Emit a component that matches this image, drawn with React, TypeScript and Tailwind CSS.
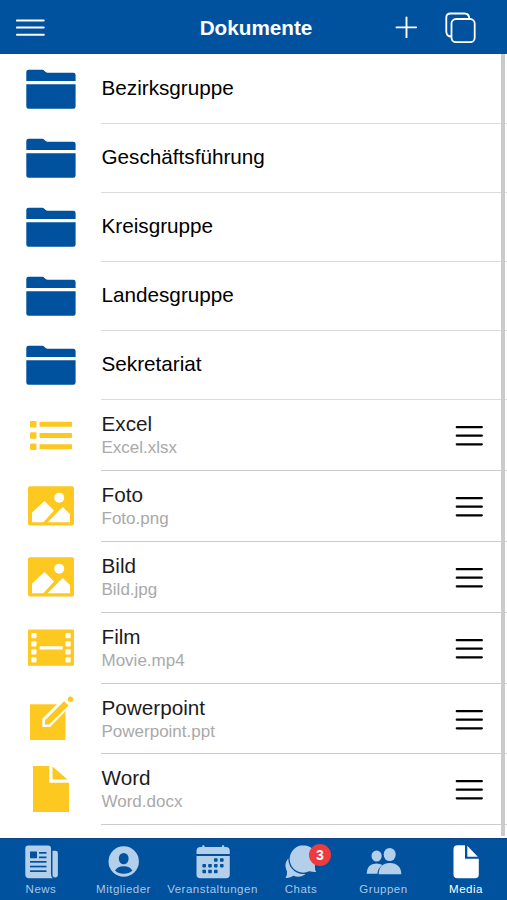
import type { ReactNode } from 'react';

const folders = ['Bezirksgruppe', 'Geschäftsführung', 'Kreisgruppe', 'Landesgruppe', 'Sekretariat'];

const FolderIcon = () => (
  <svg className="h-[68px] w-[101px] shrink-0 fill-[#00519e]" viewBox="0 0 101 68">
    <path d="M26.3 26V17q0-2.3 2.3-2.3H42q1.5 0 2.5 1.2l.8.8q1 1 2.5 1H73.3q2.300 0 2.300 2.300V26z" />
    <path d="M26.300 29.300H75.600V51.500q0 2.300-2.300 2.300H28.600q-2.300 0-2.300-2.300z" />
  </svg>
);

const ListIcon = () => (
  <>
    {[21, 32.2, 43.5].map((y) => (
      <g key={y}>
        <rect x="30" y={y} width="6.5" height="6.5" rx="1.2" />
        <rect x="39.5" y={y + 0.7} width="32.5" height="5" rx="0.8" />
      </g>
    ))}
  </>
);

const ImageIcon = () => (
  <>
    <rect x="28" y="15.3" width="46" height="39.3" rx="2" />
    <g className="fill-white">
      <circle cx="59.2" cy="26.7" r="5" />
      <path d="M32 51.3V41.5L44.5 30 54 39.5 43.3 51.3z" />
      <path d="M47.5 51.3 62.7 36 70 43V51.3z" />
    </g>
  </>
);

const FilmIcon = () => (
  <>
    <rect x="28" y="16.5" width="46" height="36.3" rx="1" />
    <g className="fill-white">
      {[20, 28.2, 36.2, 44.2].map((y) => (
        <g key={y}>
          <rect x="31.3" y={y} width="5.2" height="5.2" rx="1" />
          <rect x="65.5" y={y} width="5.2" height="5.2" rx="1" />
        </g>
      ))}
      <rect x="39.5" y="33.2" width="23.3" height="3.3" rx="0.8" />
    </g>
  </>
);

const EditIcon = () => (
  <>
    <rect x="30" y="20.3" width="35.5" height="35.7" />
    <path className="fill-white" d="M42.300 43V34.800L61.500 15.500 72.500 20 50 43z" />
    <path d="M45 40.500V36.200L64 17.200 68.600 21.600 49.200 40.500z" />
    <circle cx="70.500" cy="15.300" r="2.700" />
  </>
);

const FileIcon = () => (
  <>
    <path d="M33 12H49.3V28.8H69V58H33z" />
    <path d="M52.5 12.5V25.5H67.5z" />
  </>
);

const files: { title: string; name: string; icon: ReactNode }[] = [
  { title: 'Excel', name: 'Excel.xlsx', icon: <ListIcon /> },
  { title: 'Foto', name: 'Foto.png', icon: <ImageIcon /> },
  { title: 'Bild', name: 'Bild.jpg', icon: <ImageIcon /> },
  { title: 'Film', name: 'Movie.mp4', icon: <FilmIcon /> },
  { title: 'Powerpoint', name: 'Powerpoint.ppt', icon: <EditIcon /> },
  { title: 'Word', name: 'Word.docx', icon: <FileIcon /> },
];

const NewsIcon = () => (
  <>
    <path d="M7.3 2.5H27Q30 2.5 30 5.5V31.5Q30 34 32 35.3H8Q4.3 35.3 4.3 31.5V5.5Q4.3 2.5 7.3 2.5z" />
    <path d="M31.5 7.8H34.5Q36.9 7.8 36.9 10.2V31.5Q36.9 34.5 34.2 34.5 31.5 34.5 31.5 31.5z" />
    <g className="fill-[#00519e]">
      <rect x="9" y="8.5" width="7" height="6.7" rx="0.6" />
      <rect x="18" y="9" width="7.5" height="1.7" />
      <rect x="18" y="13.5" width="7.5" height="1.7" />
      <rect x="9" y="18" width="16.5" height="1.7" />
      <rect x="9" y="22.7" width="16.5" height="1.7" />
      <rect x="9" y="27.3" width="16.5" height="1.7" />
    </g>
  </>
);

const MemberIcon = () => (
  <>
    <circle cx="19.7" cy="18.5" r="15.2" />
    <g className="fill-[#00519e]">
      <ellipse cx="19.7" cy="15.6" rx="4.9" ry="5.700" />
      <path d="M11 27.500Q13.500 23.200 19.700 23.200T28.400 27.500Q25 30.800 19.700 30.800T11 27.500z" />
    </g>
  </>
);

const calendarDots = [
  [22.8, 17], [28.8, 17],
  [11.2, 22.7], [17, 22.7], [22.8, 22.7], [28.8, 22.7],
  [11.2, 28.5], [17, 28.5], [22.8, 28.5],
];

const CalendarIcon = () => (
  <>
    <rect x="9.2" y="2.3" width="2.3" height="4" rx="0.8" />
    <rect x="28.9" y="2.3" width="2.3" height="4" rx="0.8" />
    <path d="M3.5 11V8Q3.5 4 7.5 4H32.8Q36.8 4 36.8 8V11z" />
    <path d="M3.5 13H36.8V31.5Q36.8 35.3 33 35.3H7.3Q3.5 35.3 3.5 31.5z" />
    <g className="fill-[#00519e]">
      {calendarDots.map(([x, y]) => (
        <rect key={`${x}-${y}`} x={x - 1.8} y={y - 1.7} width="3.6" height="3.4" rx="0.8" />
      ))}
    </g>
  </>
);

const ChatIcon = () => (
  <>
    <path d="M8 15Q4 18.5 4.5 23.5 5 26.5 6 28.5 6.5 31.5 4.5 34.8 9 35.3 12.5 32.8 18.5 35.3 24 31.5L24 20z" />
    <path
      className="stroke-[#00519e]"
      strokeWidth="1.3"
      d="M22.3 1.7A14.3 14.3 0 0 1 34.5 23.2Q34.5 26.5 36 29.7 31.5 30 28.5 28.9A14.3 14.3 0 1 1 22.3 1.7z"
    />
  </>
);

const GroupIcon = () => (
  <>
    <ellipse cx="12.6" cy="13" rx="5.100" ry="5.600" />
    <path d="M2.600 30.800Q2.600 21 12.500 20.500 16 20.500 18.500 22 14 25 13.300 30.800z" />
    <ellipse cx="25.700" cy="11.500" rx="6" ry="6.600" />
    <path d="M14.700 31.300Q15 20.300 25.800 20.100 37 20.300 37.300 31.300z" />
  </>
);

const MediaIcon = () => (
  <>
    <path d="M11.500 2.300H19V15.800H32.800V31.500Q32.800 35.300 29 35.300H11.500Q7.500 35.300 7.500 31.500V6.300Q7.500 2.300 11.500 2.300z" />
    <path d="M21.300 2.800 31.800 13.800H21.300z" />
  </>
);

const tabs: { label: string; width: string; icon: ReactNode; badge?: number; active?: boolean }[] = [
  { label: 'News', width: 'w-[82px]', icon: <NewsIcon /> },
  { label: 'Mitglieder', width: 'w-[83px]', icon: <MemberIcon /> },
  { label: 'Veranstaltungen', width: 'w-[95px]', icon: <CalendarIcon /> },
  { label: 'Chats', width: 'w-[82px]', icon: <ChatIcon />, badge: 3 },
  { label: 'Gruppen', width: 'w-[83px]', icon: <GroupIcon /> },
  { label: 'Media', width: 'w-[82px]', icon: <MediaIcon />, active: true },
];

const Header = () => (
  <header className="grid h-[54px] grid-cols-[1fr_auto_1fr] items-center bg-[#00519e] text-white">
    <button className="ml-4 w-7">
      <svg className="h-6 w-[29px] stroke-current" viewBox="0 0 29 24" strokeWidth="2.1" strokeLinecap="round">
        <path d="M1 5.5H27.700M1 12.500H27.700M1 19.700H27.700" />
      </svg>
    </button>
    <h1 className="ml-[5px] pt-px text-[20.700px]/7 font-bold">Dokumente</h1>
    <div className="mr-[31px] flex items-center justify-end gap-[27px]">
      <button>
        <svg className="h-[22px] w-[22px] stroke-current" viewBox="0 0 22 22" strokeWidth="1.9" strokeLinecap="round">
          <path d="M11.500 1.500V21.300M1.500 11.400H21.300" />
        </svg>
      </button>
      <button>
        <svg className="h-8 w-8 fill-none stroke-current" viewBox="0 0 32 32" strokeWidth="1.8">
          <rect x="7.500" y="8" width="23.200" height="23.200" rx="4.500" />
          <path d="M7.500 25.500Q2.300 25.500 2.300 20.500V6.500Q2.300 2.500 6.500 2.500H20.500Q25.300 2.500 25.300 8" />
        </svg>
      </button>
    </div>
  </header>
);

const App = () => {
  return (
    <div className="flex h-[900px] w-[507px] flex-col bg-white font-['Liberation_Sans',Arial,sans-serif]">
      <Header />
      <main className="relative flex-1 pt-px">
        {folders.map((name) => (
          <div key={name} className="flex h-[69px]">
            <FolderIcon />
            <p className="flex-1 border-b border-[#dcdcdc] pt-[19px] pl-[0.500px] text-[20.700px]/7 text-black">{name}</p>
          </div>
        ))}
        {files.map((file) => (
          <div key={file.name} className="flex h-[70.900px]">
            <svg className="h-[70px] w-[101px] shrink-0 fill-[#fdc81f]" viewBox="0 0 101 70">
              {file.icon}
            </svg>
            <div className="flex flex-1 justify-between border-b border-[#cccccc]">
              <div className="pt-2.5 pl-[0.500px]">
                <p className="text-[20.700px]/7 text-[#1c1c1e]">{file.title}</p>
                <p className="text-[17px]/5 text-[#a9a9a9]">{file.name}</p>
              </div>
              <svg className="mr-[23px] h-[70px] w-[29px] stroke-black" viewBox="0 0 29 70" strokeWidth="2.3" strokeLinecap="round">
                <path d="M1.8 27.2H26.8M1.8 35.7H26.8M1.8 44.3H26.8" />
              </svg>
            </div>
          </div>
        ))}
        <div className="absolute top-0 right-[2.500px] h-[782px] w-[3.500px] bg-[#cbcbcb]" />
      </main>
      <nav className="flex h-[62px] border-t border-[#0b4488] bg-[#00519e]">
        {tabs.map((tab) => (
          <div
            key={tab.label}
            className={`${tab.width} relative flex flex-col items-center pt-1 ${tab.active ? 'fill-white text-white' : 'fill-[#b3cfea] text-[#a9c6e4]'}`}
          >
            <svg className="h-9 w-10 shrink-0" viewBox="0 0 40 36">
              {tab.icon}
            </svg>
            <span className="pt-0.5 text-[11.500px]/4 tracking-[0.500px]">{tab.label}</span>
            {tab.badge && (
              <span className="absolute top-[5px] left-[49px] h-[22px] w-[22px] rounded-full bg-[#ee3b3e] text-center text-sm/[22px] font-bold text-white">
                {tab.badge}
              </span>
            )}
          </div>
        ))}
      </nav>
    </div>
  );
};

export default App;
